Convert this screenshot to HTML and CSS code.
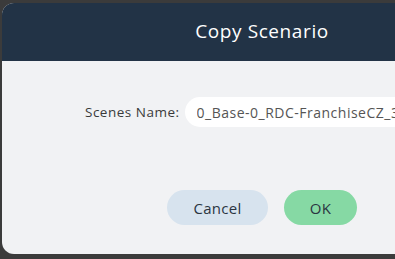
FILE: index.html
```html
<!DOCTYPE html>
<html lang="en">
<head>
  <meta charset="UTF-8" />
  <title>Copy Scenario</title>
  <link rel="stylesheet" href="styles.css">
</head>
<body>
  <div class="dialog">
    <div class="dialog-header">Copy Scenario</div>
    <div class="dialog-body">
      <div class="field">
        <label class="field-label">Scenes Name:</label>
        <input class="field-input" type="text" value="0_Base-0_RDC-FranchiseCZ_3">
      </div>
      <div class="actions">
        <button class="btn btn-cancel">Cancel</button>
        <button class="btn btn-ok">OK</button>
      </div>
    </div>
  </div>
</body>
</html>
```
FILE: styles.css
```css
body {
  margin: 0;
  background: #3b3b3b;
  font-family: 'Open Sans', sans-serif;
  overflow: hidden;
  width: 395px;
  height: 259px;
}

.dialog {
  margin: 3px 0 0 2px;
  width: 520px;
  height: 251px;
  border-radius: 12px;
  overflow: hidden;
  background: #f1f2f4;
}

.dialog-header {
  height: 58px;
  background: #223346;
  color: #fff;
  font-size: 19px;
  font-weight: 500;
  letter-spacing: 0.6px;
  display: flex;
  align-items: center;
  justify-content: center;
  padding-bottom: 2px;
  box-sizing: border-box;
}

.dialog-body {
  padding-top: 36px;
}

.field {
  display: flex;
  align-items: center;
  padding-left: 83px;
}

.field-label {
  flex-shrink: 0;
  white-space: nowrap;
  font-size: 13.5px;
  letter-spacing: 0.5px;
  color: #3a3a3a;
  margin-right: 5px;
}

.field-input {
  flex-shrink: 0;
  border: none;
  outline: none;
  background: #fff;
  border-radius: 15px;
  height: 30px;
  width: 320px;
  padding: 0 12px;
  font-family: inherit;
  font-size: 14px;
  letter-spacing: 0.5px;
  color: #555;
}

.actions {
  display: flex;
  gap: 16px;
  margin-top: 63px;
  padding-left: 165px;
}

.btn {
  border: none;
  border-radius: 18px;
  height: 35px;
  font-family: inherit;
  font-size: 15px;
  letter-spacing: 0.3px;
  color: #2b3542;
}

.btn-cancel {
  width: 101px;
  background: #d7e3ee;
}

.btn-ok {
  width: 73px;
  background: #86d9a4;
}
```
